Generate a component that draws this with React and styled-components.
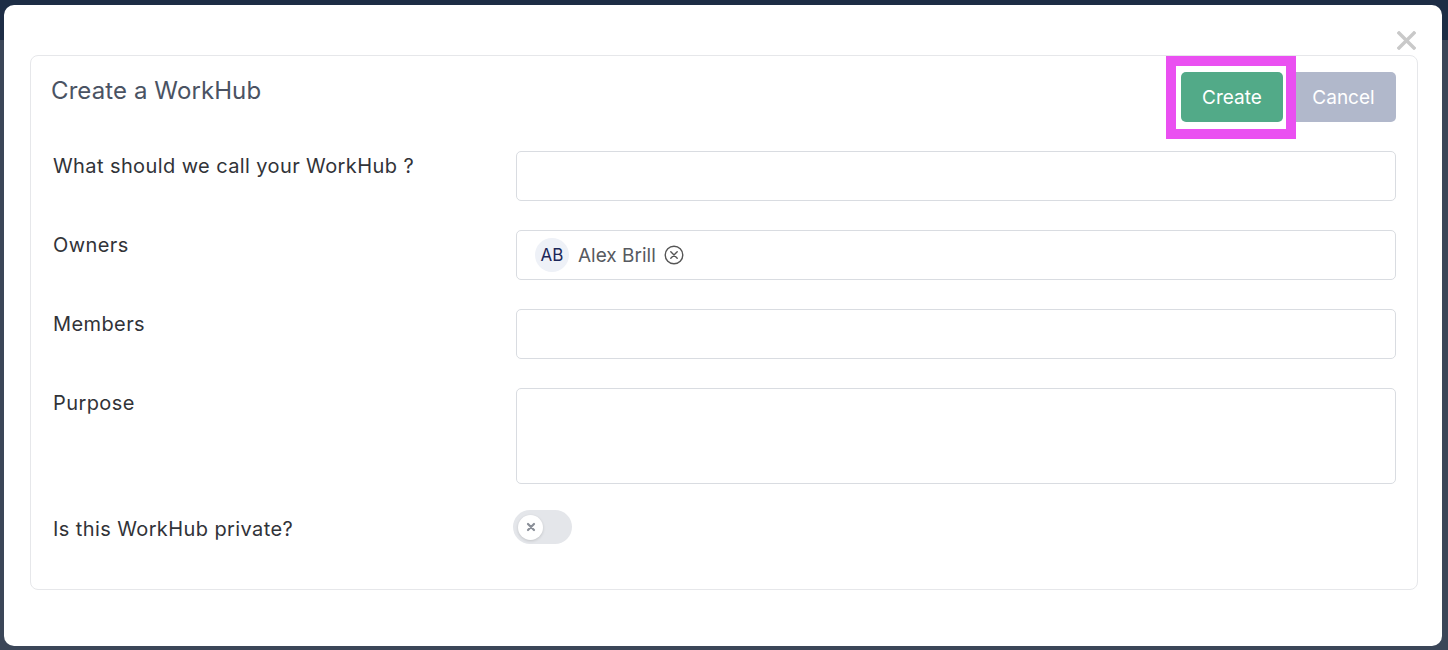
import React, { useState } from "react";
import styled, { createGlobalStyle } from "styled-components";

const GlobalStyle = createGlobalStyle`
	html, body {
		margin: 0;
		padding: 0;
		height: 100%;
	}
	body {
		font-family: Inter, "Noto Sans", "Liberation Sans", sans-serif;
		background: #3b4658;
		overflow: hidden;
	}
`;

const Backdrop = styled.div`
	position: fixed;
	inset: 0;
	background: #3b4658;

	.topbar {
		height: 40px;
		background: #1d2d45;
	}
`;

const Modal = styled.div`
	position: fixed;
	left: 4px;
	top: 5px;
	width: 1438px;
	height: 641px;
	box-sizing: border-box;
	padding: 50px 24px 0 26px;
	background: #fff;
	border-radius: 10px;
`;

const CloseButton = styled.button`
	position: absolute;
	top: 26px;
	right: 26px;
	width: 19px;
	height: 19px;
	padding: 0;
	border: none;
	background: none;
	display: flex;
	cursor: pointer;
`;

const Card = styled.div`
	border: 1px solid #e6e7ea;
	border-radius: 8px;
	padding: 16px 21px 44px 22px;
	height: 535px;
	box-sizing: border-box;
`;

const Header = styled.div`
	display: flex;
	justify-content: space-between;
	align-items: flex-start;
	margin-bottom: 29px;

	h1 {
		margin: 4px 0 0 -2px;
		font-size: 24px;
		font-weight: 400;
		color: #4a5363;
		letter-spacing: 0.1px;
	}
`;

const Actions = styled.div`
	display: flex;
	gap: 8px;
	position: relative;
`;

const Button = styled.button`
	height: 50px;
	padding: 0;
	border: none;
	border-radius: 5px;
	font-family: inherit;
	font-size: 19px;
	color: #fff;
	background: ${(p) => (p.$variant === "primary" ? "#52aa88" : "#b1b8cb")};
	cursor: pointer;
	width: ${(p) => (p.$variant === "primary" ? "102px" : "105px")};
`;

const Highlight = styled.div`
	position: absolute;
	left: -15px;
	top: -16px;
	width: 130px;
	height: 83px;
	box-sizing: border-box;
	border: 10px solid #ea50f1;
	pointer-events: none;
`;

const Row = styled.div`
	display: grid;
	grid-template-columns: 463px 1fr;
	align-items: start;
	margin-bottom: ${(p) => (p.$space !== undefined ? p.$space : 29)}px;
`;

const Label = styled.label`
	font-size: 20px;
	line-height: 24px;
	letter-spacing: 0.4px;
	color: #313338;
	padding-top: ${(p) => (p.$offset !== undefined ? p.$offset : 3)}px;
`;

const Field = styled.div`
	height: ${(p) => p.$height || 50}px;
	box-sizing: border-box;
	border: 1px solid #d9dce1;
	border-radius: 5px;
	background: #fff;
	display: flex;
	align-items: center;
	padding: 0 18px;
	gap: 9px;
`;

const Avatar = styled.span`
	width: 34px;
	height: 34px;
	border-radius: 50%;
	background: #eef1f7;
	color: #1b2657;
	font-size: 17px;
	display: flex;
	align-items: center;
	justify-content: center;
`;

const ChipName = styled.span`
	font-size: 19px;
	color: #575a60;
	display: flex;
	align-items: center;
	gap: 8px;
`;

const Toggle = styled.button`
	margin-left: -3px;
	width: 59px;
	height: 34px;
	border: none;
	border-radius: 17px;
	background: #e4e6ea;
	padding: 0 5px;
	display: flex;
	align-items: center;
	justify-content: ${(p) => (p.$on ? "flex-end" : "flex-start")};
	cursor: pointer;

	span {
		width: 25px;
		height: 25px;
		border-radius: 50%;
		background: #fff;
		box-shadow: 0 1px 3px rgba(0, 0, 0, 0.15);
		display: flex;
		align-items: center;
		justify-content: center;
	}
`;

function CircleX() {
	return (
		<svg width="20" height="20" viewBox="0 0 20 20" fill="none" stroke="#555" strokeWidth="1.4">
			<circle cx="10" cy="10" r="8.8" />
			<path d="M6.8 6.8l6.4 6.4M13.2 6.8l-6.4 6.4" strokeLinecap="round" />
		</svg>
	);
}

export default function App() {
	const [isPrivate, setIsPrivate] = useState(false);

	return (
		<>
			<GlobalStyle />
			<Backdrop>
				<div className="topbar" />
			</Backdrop>
			<Modal>
				<CloseButton aria-label="Close">
					<svg width="19" height="19" viewBox="0 0 19 19" stroke="#c9c9c9" strokeWidth="3.4" strokeLinecap="square">
						<path d="M2 2l15 15M17 2L2 17" />
					</svg>
				</CloseButton>
				<Card>
					<Header>
						<h1>Create a WorkHub</h1>
						<Actions>
							<Button $variant="primary">Create</Button>
							<Button>Cancel</Button>
							<Highlight />
						</Actions>
					</Header>

					<Row>
						<Label>What should we call your WorkHub ?</Label>
						<Field />
					</Row>
					<Row>
						<Label>Owners</Label>
						<Field>
							<Avatar>AB</Avatar>
							<ChipName>
								Alex Brill
								<CircleX />
							</ChipName>
						</Field>
					</Row>
					<Row>
						<Label>Members</Label>
						<Field />
					</Row>
					<Row $space={26}>
						<Label>Purpose</Label>
						<Field $height={96} />
					</Row>
					<Row $space={0}>
						<Label $offset={7}>Is this WorkHub private?</Label>
						<Toggle $on={isPrivate} onClick={() => setIsPrivate(!isPrivate)}>
							<span>
								<svg width="10" height="10" viewBox="0 0 10 10" stroke="#8a8f98" strokeWidth="2.2" strokeLinecap="round">
									<path d="M2 2l6 6M8 2L2 8" />
								</svg>
							</span>
						</Toggle>
					</Row>
				</Card>
			</Modal>
		</>
	);
}
